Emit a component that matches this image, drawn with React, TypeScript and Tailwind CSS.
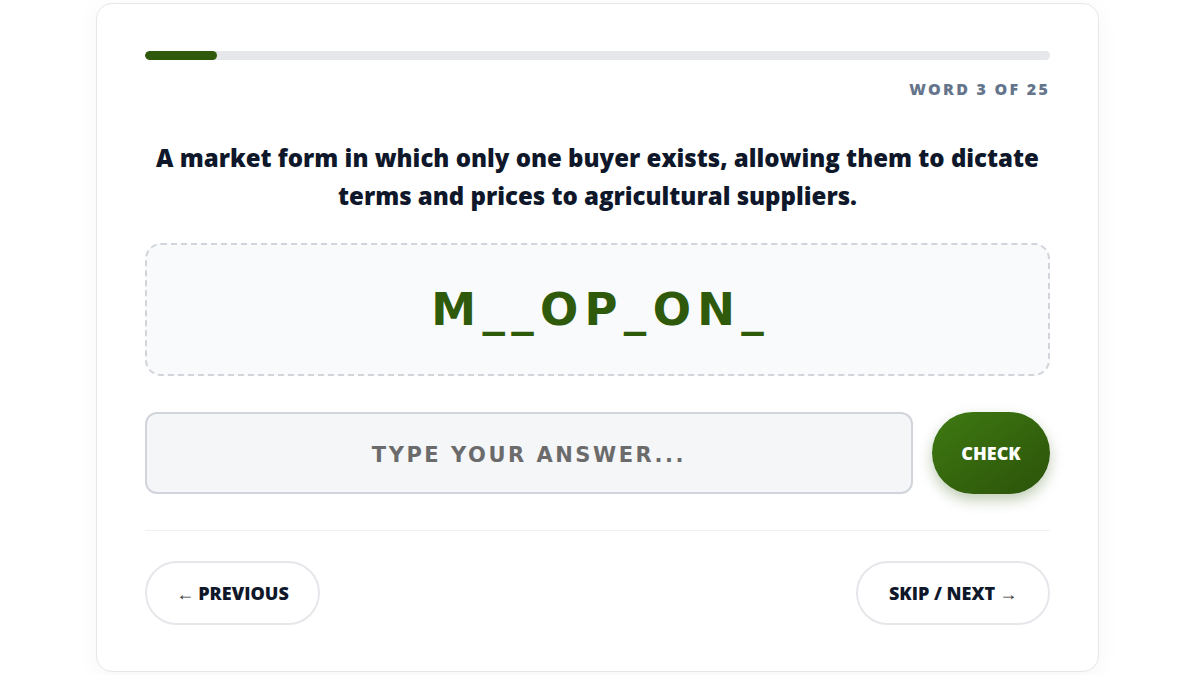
export default function App() {
  const font = { fontFamily: '"Open Sans", "Noto Sans", sans-serif' }
  const wide = { fontFamily: '"DejaVu Sans", Verdana, sans-serif' }
  return (
    <div className="min-h-[675px] w-full bg-white" style={font}>
      <div className="ml-[96px] mt-[3px] h-[669px] w-[1003px] rounded-2xl border border-gray-200 bg-white px-12 pt-[47px] shadow-[0_4px_24px_rgba(0,0,0,0.04)]">
        <div className="h-[9px] w-full overflow-hidden rounded-full bg-[#e5e7eb]">
          <div className="h-full w-[8%] rounded-full bg-[#2f5a0b]" />
        </div>
        <p className="mt-[19px] text-right text-[16px] font-extrabold leading-5 tracking-[0.14em] text-[#64748b]">
          WORD 3 OF 25
        </p>
        <h1 className="mt-[40px] text-center text-[24px] font-extrabold leading-[38px] text-[#0f172a]">
          A market form in which only one buyer exists, allowing them to dictate terms and prices to agricultural suppliers.
        </h1>
        <div className="mt-[28px] flex h-[133px] items-center justify-center rounded-2xl border-2 border-dashed border-[#d1d5db] bg-[#f8fafc]">
          <span className="pl-[0.14em] text-[45px] font-bold tracking-[0.14em] text-[#2f5a0b]" style={wide}>M__OP_ON_</span>
        </div>
        <div className="mt-[36px] flex items-center gap-[19px]">
          <div className="flex h-[82px] flex-1 items-center justify-center rounded-xl border-2 border-[#d1d5db] bg-[#f5f6f8] pt-[5px]">
            <span className="text-[21px] font-bold tracking-[0.12em] text-[#6b6b6b]" style={wide}>TYPE YOUR ANSWER...</span>
          </div>
          <button className="h-[82px] w-[118px] rounded-full bg-gradient-to-br from-[#3f7a12] to-[#2b5209] text-[18px] font-extrabold text-white shadow-[0_6px_14px_rgba(47,90,11,0.3)]">
            CHECK
          </button>
        </div>
        <div className="mt-[36px] border-t border-[#eef0f2]" />
        <div className="mt-[30px] flex items-center justify-between">
          <button className="flex h-[64px] w-[175px] items-center justify-center gap-1 rounded-full border-2 border-[#e5e7eb] bg-white text-[18px] font-extrabold text-[#0f172a]">
            <span className="font-normal text-[#333]">←</span> PREVIOUS
          </button>
          <button className="flex h-[64px] w-[194px] items-center justify-center gap-1 rounded-full border-2 border-[#e5e7eb] bg-white text-[18px] font-extrabold text-[#0f172a]">
            SKIP / NEXT <span className="font-normal text-[#333]">→</span>
          </button>
        </div>
      </div>
    </div>
  )
}
